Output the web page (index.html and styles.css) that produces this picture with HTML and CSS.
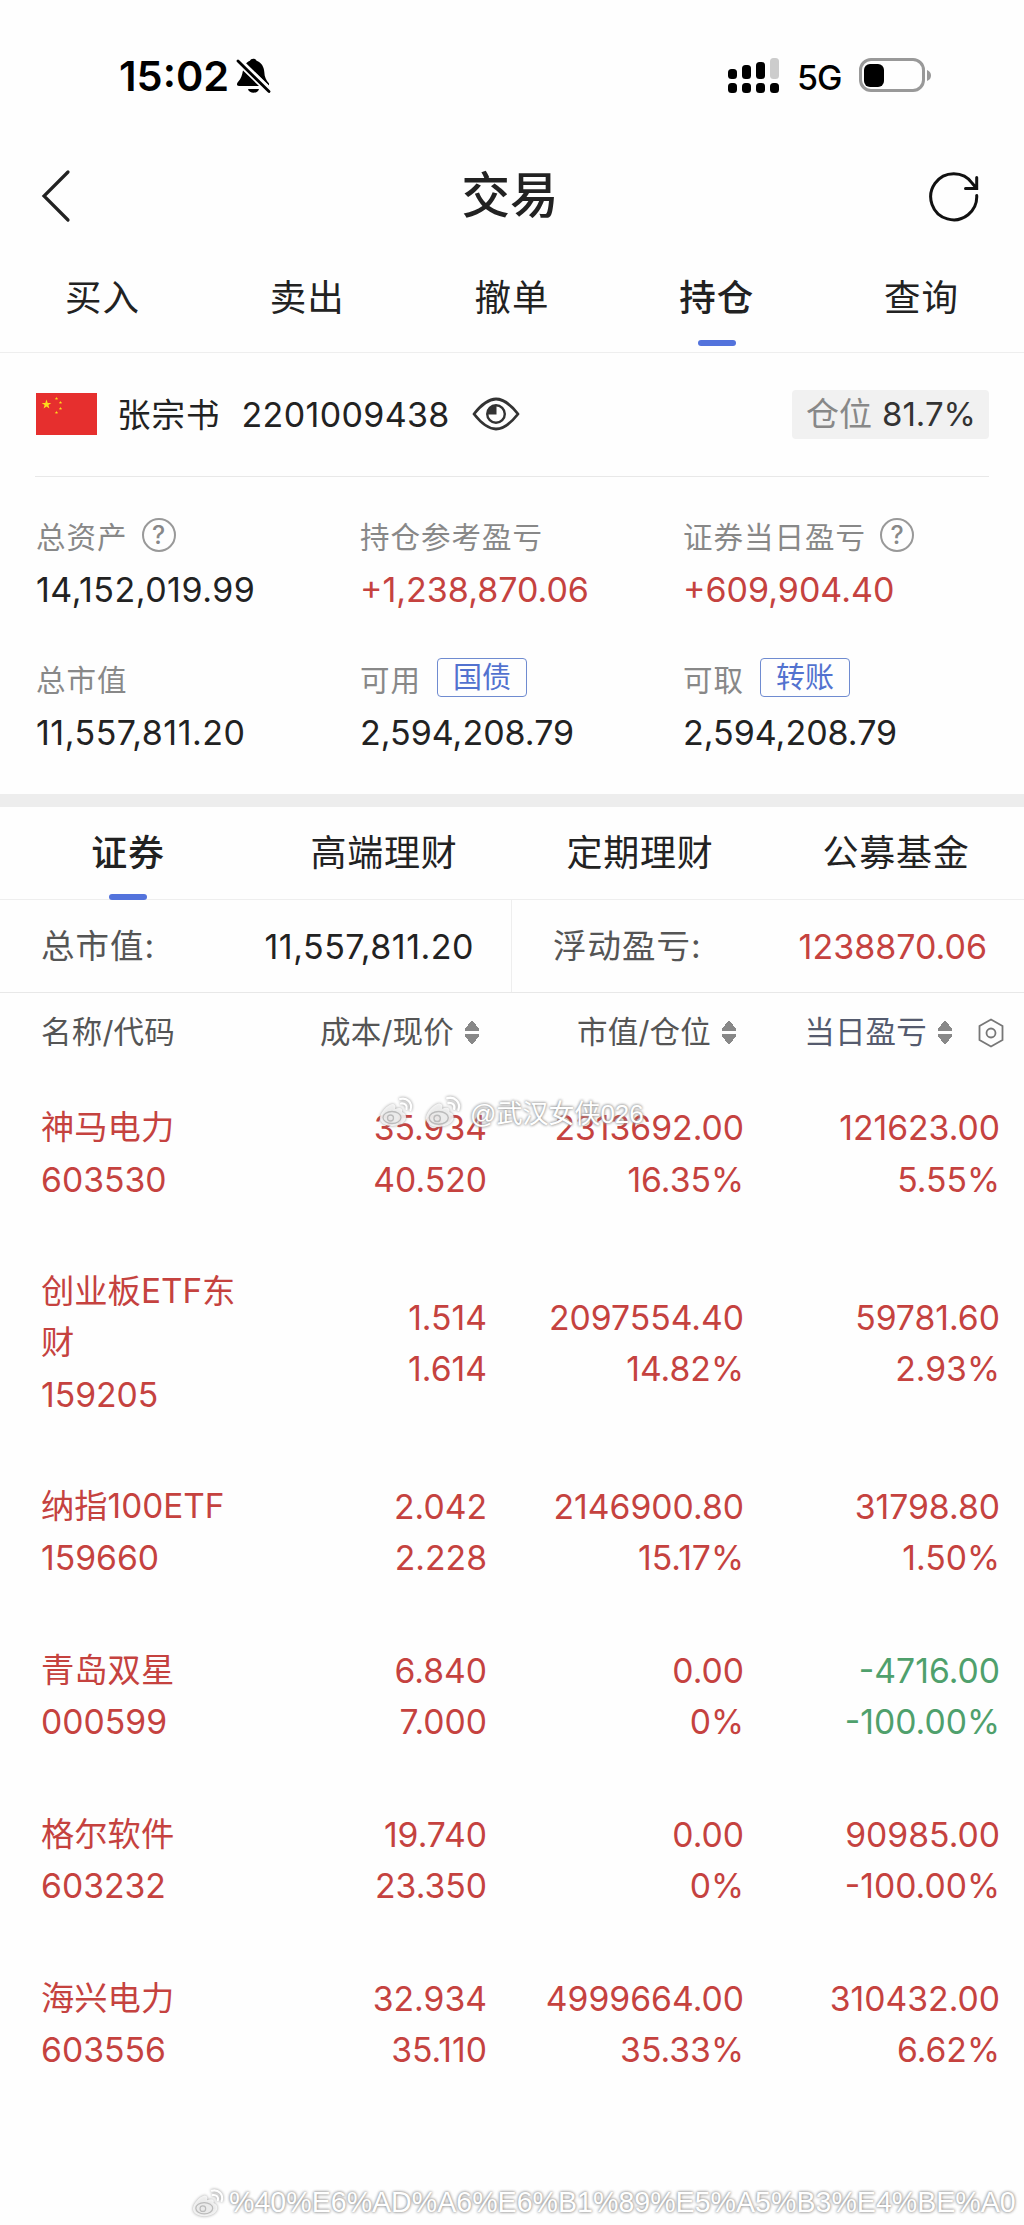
FILE: index.html
```html
<!DOCTYPE html>
<html lang="zh-CN">
<head>
    <meta charset="UTF-8">
    <meta name="viewport" content="width=device-width, initial-scale=1.0">
    <title>交易</title>
    <link rel="stylesheet" href="styles.css">
</head>
<body>
    <div class="status-bar">
        <span class="time">15:02</span>
        <svg class="bell" width="36" height="38" viewBox="0 0 36 38">
            <path d="M10 6.500C12 4.500 13 4.200 14 3.800C14.500 1 20 1 20.500 3.800C25.500 5.500 28 10 28.300 15C28.500 20 30 23 33 26.500V29Z" fill="#000"/>
            <path d="M7 13.500L23 29H3C0.500 29 0.500 26.500 2 25C5.500 21 6 18 7 13.500Z" fill="#000"/>
            <path d="M12 32H23C22 37 13 37 12 32Z" fill="#000"/>
            <path d="M2 4L33 34.500" stroke="#000" stroke-width="2.800" stroke-linecap="round"/>
            <path d="M5 2.500L34.500 31" stroke="#fff" stroke-width="1.500"/>
        </svg>
        <svg class="signal" width="52" height="36" viewBox="0 0 52 36">
            <rect x="0" y="11" width="9" height="10" rx="3.500"/>
            <rect x="14" y="7" width="9" height="14" rx="3.500"/>
            <rect x="28" y="4" width="9" height="17" rx="3.500"/>
            <rect x="42" y="0" width="9" height="21" rx="3.500" fill="#ccc"/>
            <rect x="0" y="25" width="9" height="10" rx="3.500"/>
            <rect x="14" y="25" width="9" height="10" rx="3.500"/>
            <rect x="28" y="25" width="9" height="10" rx="3.500"/>
            <rect x="42" y="25" width="9" height="10" rx="3.500"/>
        </svg>
        <span class="network">5G</span>
        <svg class="battery" width="74" height="36" viewBox="0 0 74 36">
            <rect x="1.500" y="1.500" width="63" height="31" rx="10.500" fill="none" stroke="#999" stroke-width="3"/>
            <rect x="5" y="6" width="20" height="23" rx="6"/>
            <path d="M68 12Q72 13.500 72 17.500T68 23Z" fill="#999"/>
        </svg>
    </div>

    <div class="header">
        <svg class="back" width="32" height="54" viewBox="0 0 32 54">
            <path d="M28 3L4 27L28 51" fill="none" stroke="#222" stroke-width="3.200" stroke-linecap="round"/>
        </svg>
        <h1 class="title">交易</h1>
        <svg class="refresh" width="52" height="52" viewBox="0 0 52 52">
            <path d="M48.700 25.500A23 23 0 1 1 44.500 13.500M48.700 7.500V18.500H37.500M44 13L48.700 18.500" fill="none" stroke="#111" stroke-width="3" stroke-linecap="round"/>
        </svg>
    </div>

    <div class="tabs main-tabs">
        <span class="tab">买入</span>
        <span class="tab">卖出</span>
        <span class="tab">撤单</span>
        <span class="tab active">持仓</span>
        <span class="tab">查询</span>
    </div>

    <div class="account">
        <svg class="flag" width="61" height="42" viewBox="0 0 61 42">
            <defs>
                <polygon id="star" points="0,-5 1.200,-1.600 4.800,-1.500 1.900,0.600 2.900,4 0,2 -2.900,4 -1.900,0.600 -4.800,-1.500 -1.200,-1.600"/>
            </defs>
            <rect width="61" height="42" fill="#e62f2e"/>
            <g fill="#fcdc1c">
                <use href="#star" transform="translate(10.500 11.500)"/>
                <use href="#star" transform="translate(20.500 5.500) scale(.35)"/>
                <use href="#star" transform="translate(24.500 9.500) scale(.35)"/>
                <use href="#star" transform="translate(24.500 15.500) scale(.35)"/>
                <use href="#star" transform="translate(20.500 19.500) scale(.35)"/>
            </g>
        </svg>
        <span class="name">张宗书</span>
        <span class="number">2201009438</span>
        <svg class="eye" width="48" height="34" viewBox="0 0 48 34">
            <path d="M2 17C11 5.500 18 2 24 2S37 5.500 46 17C37 28.500 30 32 24 32S11 28.500 2 17Z" fill="none" stroke="#333" stroke-width="2.800" stroke-linejoin="round"/>
            <circle cx="24" cy="17" r="8.800" fill="none" stroke="#333" stroke-width="2.400"/>
            <path d="M24.500 17.500H15.500A9 9 0 0 1 24.500 8.500Z" fill="#333"/>
        </svg>
        <span class="position"><span class="position-label">仓位</span>81.7%</span>
    </div>

    <div class="stats">
        <div class="stat">
            <div class="label">总资产 <span class="help">?</span></div>
            <div class="value wide">14,152,019.99</div>
        </div>
        <div class="stat">
            <div class="label">持仓参考盈亏</div>
            <div class="value red">+1,238,870.06</div>
        </div>
        <div class="stat">
            <div class="label">证券当日盈亏 <span class="help">?</span></div>
            <div class="value red">+609,904.40</div>
        </div>
        <div class="stat">
            <div class="label">总市值</div>
            <div class="value wide">11,557,811.20</div>
        </div>
        <div class="stat">
            <div class="label">可用 <button class="link-btn">国债</button></div>
            <div class="value">2,594,208.79</div>
        </div>
        <div class="stat">
            <div class="label">可取 <button class="link-btn">转账</button></div>
            <div class="value">2,594,208.79</div>
        </div>
    </div>

    <div class="tabs sub-tabs">
        <span class="tab active">证券</span>
        <span class="tab">高端理财</span>
        <span class="tab">定期理财</span>
        <span class="tab">公募基金</span>
    </div>

    <div class="summary">
        <div class="summary-item"><span class="summary-label">总市值:</span><span class="wide">11,557,811.20</span></div>
        <div class="summary-item"><span class="summary-label">浮动盈亏:</span><span class="red">1238870.06</span></div>
    </div>

    <div class="row table-head">
        <div><span>名称/代码</span></div>
        <div><span>成本/现价</span><i class="sort"></i></div>
        <div><span>市值/仓位</span><i class="sort"></i></div>
        <div class="today"><span>当日盈亏</span><i class="sort"></i>
            <svg class="setting" width="26" height="30" viewBox="0 0 26 30">
                <path d="M13 1.500L24.500 8V22L13 28.500L1.500 22V8Z" fill="none" stroke="#777" stroke-width="1.800"/>
                <circle cx="13" cy="15" r="4.500" fill="none" stroke="#777" stroke-width="1.800"/>
            </svg>
        </div>
    </div>

    <div class="holdings">
        <div class="row">
            <div><span class="stock">神马电力</span>603530</div>
            <div>35.934<br>40.520</div>
            <div>2313692.00<br>16.35%</div>
            <div>121623.00<br>5.55%</div>
        </div>
        <div class="row">
            <div><span class="stock">创业板ETF东财</span>159205</div>
            <div>1.514<br>1.614</div>
            <div>2097554.40<br>14.82%</div>
            <div>59781.60<br>2.93%</div>
        </div>
        <div class="row">
            <div><span class="stock">纳指100ETF</span>159660</div>
            <div>2.042<br>2.228</div>
            <div>2146900.80<br>15.17%</div>
            <div>31798.80<br>1.50%</div>
        </div>
        <div class="row">
            <div><span class="stock">青岛双星</span>000599</div>
            <div>6.840<br>7.000</div>
            <div>0.00<br>0%</div>
            <div class="green">-4716.00<br>-100.00%</div>
        </div>
        <div class="row">
            <div><span class="stock">格尔软件</span>603232</div>
            <div>19.740<br>23.350</div>
            <div>0.00<br>0%</div>
            <div>90985.00<br>-100.00%</div>
        </div>
        <div class="row">
            <div><span class="stock">海兴电力</span>603556</div>
            <div>32.934<br>35.110</div>
            <div>4999664.00<br>35.33%</div>
            <div>310432.00<br>6.62%</div>
        </div>
    </div>

    <svg width="0" height="0" class="symbols">
        <symbol id="weibo" viewBox="0 0 36 32">
            <path d="M14 8C9 9 2 17 2 22C2 27 8 30 14 30C22 30 28 26 28 21C28 18 26 17 24 16C25 12 22 11 17 13C18 10 17 8 14 8Z" fill="#fff" fill-opacity=".8"/>
            <ellipse cx="14" cy="21.500" rx="9" ry="6" fill="none" stroke="#bbb" stroke-width="1.300"/>
            <circle cx="12.500" cy="22" r="3" fill="none" stroke="#bbb" stroke-width="1.300"/>
            <path d="M22 3C29 1 35 7 32.500 14M23 7.500C27 7 29.500 9.500 28.500 13" fill="none" stroke="#fff" stroke-width="2.200" stroke-linecap="round"/>
        </symbol>
    </svg>
    <div class="watermark center-mark">
        <svg class="ghost" width="38" height="32"><use href="#weibo"/></svg>
        <svg width="40" height="34"><use href="#weibo"/></svg>
        <span>@武汉女侠026</span>
    </div>
    <div class="watermark bottom-mark">
        <svg width="34" height="30"><use href="#weibo"/></svg>
        <span>%40%E6%AD%A6%E6%B1%89%E5%A5%B3%E4%BE%A0</span>
    </div>
</body>
</html>
```
FILE: styles.css
```css
* {
    box-sizing: border-box;
}
body {
    position: relative;
    margin: 0;
    height: 2225px;
    overflow: hidden;
    background-color: #fefefe;
    color: #222;
    font-family: Inter, "Noto Sans CJK SC", sans-serif;
    font-size: 34px;
}
svg {
    display: block;
    flex: none;
}
.red {
    color: #c5423f;
}
.wide {
    letter-spacing: .5px;
}

/* status bar */
.status-bar {
    display: flex;
    align-items: center;
    height: 152px;
    padding: 0 91px 0 119px;
    color: #000;
}
.time {
    font-size: 41.500px;
    font-weight: 600;
    width: 117px;
}
.signal {
    margin-left: auto;
}
.network {
    width: 46px;
    margin: 3px 16px 0 17px;
    font-weight: 500;
    font-size: 34px;
    letter-spacing: -1px;
}

/* header */
.header {
    display: grid;
    grid-template-columns: 1fr auto 1fr;
    align-items: center;
    height: 88px;
    padding: 0 44px 0 40px;
}
.refresh {
    justify-self: end;
}
.title {
    margin: 0;
    font-size: 48.500px;
    font-weight: 500;
    line-height: 86px;
}

/* tabs */
.tabs {
    display: flex;
    border-bottom: 1px solid #eee;
}
.tab {
    position: relative;
    flex: 1;
    text-align: center;
}
.active {
    font-weight: 500;
}
.active::after {
    content: "";
    position: absolute;
    left: 50%;
    bottom: 0;
    width: 38px;
    height: 6px;
    margin-left: -19px;
    border-radius: 3px;
    background-color: #5373dc;
}
.main-tabs {
    height: 113px;
    font-size: 36.500px;
    letter-spacing: 1px;
}
.main-tabs .tab {
    line-height: 116px;
}
.main-tabs .active::after {
    bottom: 6px;
}

/* account */
.account {
    display: flex;
    align-items: center;
    height: 124px;
    margin: 0 35px;
    padding-bottom: 1px;
    border-bottom: 1px solid #e8e8e8;
}
.flag {
    margin-left: 1px;
}
.name {
    margin-left: 20px;
    padding-bottom: 3px;
    font-size: 33.500px;
    letter-spacing: 1px;
}
.number {
    width: 208px;
    margin-left: 21px;
    letter-spacing: .35px;
}
.eye {
    margin-left: 22px;
}
.position {
    display: flex;
    gap: 10px;
    width: 197px;
    height: 49px;
    margin-left: auto;
    padding-left: 14px;
    border-radius: 4px;
    background-color: #f1f1f1;
    font-size: 33px;
    line-height: 48px;
    color: #333;
}
.position-label {
    color: #888;
}

/* asset numbers */
.stats {
    display: grid;
    grid-template-columns: 324px 323px 1fr;
    align-content: start;
    row-gap: 37px;
    height: 330px;
    padding: 31px 0 0 36px;
    border-bottom: 13px solid #ededed;
}
.stat {
    height: 106px;
}
.label {
    display: flex;
    align-items: center;
    height: 54px;
    padding-bottom: 1px;
    font-size: 29.500px;
    letter-spacing: 1px;
    color: #888;
}
.help {
    width: 34px;
    height: 34px;
    margin-left: 14px;
    border: 2px solid #999;
    border-radius: 50%;
    font-size: 25px;
    font-weight: 500;
    line-height: 30px;
    text-align: center;
    letter-spacing: 0;
}
.link-btn {
    width: 90px;
    height: 39px;
    margin-left: 16px;
    padding: 0;
    border: 1px solid #6f8bd0;
    border-radius: 4px;
    background: none;
    color: #5272cf;
    font-family: inherit;
    font-size: 29px;
    line-height: 36px;
}
.value {
    line-height: 56px;
    white-space: nowrap;
}

/* product tabs */
.sub-tabs {
    height: 93px;
    font-size: 36px;
    letter-spacing: .8px;
}
.sub-tabs .tab {
    line-height: 93px;
}
.sub-tabs .active::after {
    bottom: -1px;
}

.summary {
    display: flex;
    height: 93px;
    border-bottom: 1px solid #e8e8e8;
    line-height: 93px;
}
.summary-item {
    display: flex;
    justify-content: space-between;
    width: 512px;
    padding: 0 37px 0 41px;
    border-right: 1px solid #eee;
}
.summary-item + .summary-item {
    border-right: 0;
}
.summary-label {
    font-size: 33.500px;
    letter-spacing: 1px;
    color: #555;
}

/* table */
.row {
    display: grid;
    grid-template-columns: 210px 236px 257px 256px;
    align-items: center;
    padding-left: 41px;
    text-align: right;
}
.row > div:first-child {
    text-align: left;
}
.table-head {
    height: 79px;
    font-size: 30.500px;
    letter-spacing: .2px;
    color: #555;
}
.table-head > div {
    display: flex;
    align-items: center;
    justify-content: flex-end;
    padding-right: 8px;
}
.table-head span {
    padding-bottom: 6px;
}
.table-head > div:first-child {
    justify-content: flex-start;
}
.table-head .today {
    color: #555b6e;
    padding-right: 0;
    margin-right: -4px;
}
.sort {
    width: 14px;
    height: 25px;
    margin-left: 11px;
    background:
        conic-gradient(from 142deg at 50% 0, #888 76deg, transparent 0) top / 14px 11px no-repeat,
        conic-gradient(from -38deg at 50% 100%, #888 76deg, transparent 0) bottom / 14px 11px no-repeat;
}
.setting {
    margin-left: 26px;
}
.holdings {
    display: flex;
    flex-direction: column;
    gap: 61.400px;
    padding-top: 30.400px;
    font-size: 33.700px;
    line-height: 51.200px;
    color: #c5423f;
}
.stock {
    display: block;
    font-size: 33.300px;
}
.green {
    color: #4fa06c;
}

/* watermarks */
.symbols {
    position: absolute;
}
.watermark {
    position: absolute;
    display: flex;
    align-items: center;
    color: #fff;
    font-family: "Liberation Sans", "Noto Sans CJK SC", sans-serif;
    text-shadow: 0 0 3px #888, 0 0 3px #aaa;
    white-space: nowrap;
}
.watermark svg {
    filter: drop-shadow(0 0 1.500px #888);
}
.center-mark {
    left: 377px;
    top: 1093px;
    font-size: 26px;
}
.center-mark .ghost {
    margin-right: 8px;
}
.center-mark span {
    margin-left: 7px;
}
.bottom-mark {
    left: 191px;
    top: 2186px;
    font-size: 28.600px;
}
.bottom-mark span {
    margin-left: 4px;
}
```
